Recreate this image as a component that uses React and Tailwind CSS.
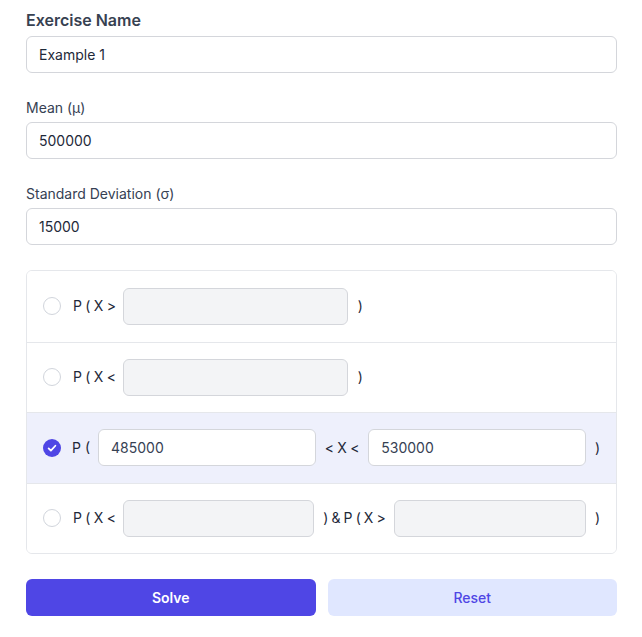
import { useState } from 'react'

const font = { fontFamily: 'Inter, "Noto Sans", sans-serif' }

function Radio({ checked, onClick }) {
  if (checked) {
    return (
      <button onClick={onClick} className="w-[18px] h-[18px] shrink-0 rounded-full bg-[#4f46e5] flex items-center justify-center">
        <svg viewBox="0 0 16 16" className="w-3 h-3" fill="none" stroke="white" strokeWidth="2.4" strokeLinecap="round" strokeLinejoin="round">
          <path d="M3.5 8.5l3 3 6-6.5" />
        </svg>
      </button>
    )
  }
  return <button onClick={onClick} className="w-[18px] h-[18px] shrink-0 rounded-full border border-gray-300 bg-white" />
}

function BoxInput({ value, active, className = '' }) {
  return (
    <input
      defaultValue={value}
      disabled={!active}
      className={`h-[37px] rounded-md border border-[#d4d6db] px-3 text-sm text-gray-700 outline-none ${
        active ? 'bg-white' : 'bg-[#f3f4f6]'
      } ${className}`}
    />
  )
}

export default function App() {
  const [selected, setSelected] = useState(2)

  const fields = [
    { label: 'Exercise Name', value: 'Example 1', bold: true },
    { label: 'Mean (μ)', value: '500000' },
    { label: 'Standard Deviation (σ)', value: '15000' },
  ]

  const rowClass = (i) =>
    `flex items-center h-[70.5px] pl-4 pr-4 ${i > 0 ? 'border-t border-gray-200' : ''} ${
      selected === i ? 'bg-[#eef0fc]' : 'bg-white'
    }`

  return (
    <div style={font} className="bg-white min-h-screen pl-[26px] pr-[25px] pt-[9px] pb-6 text-gray-700">
      <div className="flex flex-col gap-[25px]">
        {fields.map((f) => (
          <div key={f.label}>
            <label
              className={`block ${
                f.bold ? 'text-base leading-[22px] font-semibold text-[#374151] mb-[5px]' : 'text-sm leading-5 mb-1'
              }`}
            >
              {f.label}
            </label>
            <input
              defaultValue={f.value}
              className="w-full h-[37px] rounded-md border border-[#d4d6db] px-3 text-sm text-gray-800 outline-none"
            />
          </div>
        ))}

        <div className="rounded-md border border-gray-200 overflow-hidden text-sm text-gray-800">
          <div className={rowClass(0)}>
            <Radio checked={selected === 0} onClick={() => setSelected(0)} />
            <span className="ml-3 mr-[7px] tracking-[-0.02em]">P ( X &gt;</span>
            <BoxInput active={selected === 0} className="w-[225px]" />
            <span className="ml-[10px]">)</span>
          </div>
          <div className={rowClass(1)}>
            <Radio checked={selected === 1} onClick={() => setSelected(1)} />
            <span className="ml-3 mr-[7px] tracking-[-0.02em]">P ( X &lt;</span>
            <BoxInput active={selected === 1} className="w-[225px]" />
            <span className="ml-[10px]">)</span>
          </div>
          <div className={rowClass(2)}>
            <Radio checked={selected === 2} onClick={() => setSelected(2)} />
            <span className="ml-[11px] mr-2">P (</span>
            <BoxInput value="485000" active={selected === 2} className="flex-1 min-w-0" />
            <span className="mx-[9px] tracking-[-0.02em]">&lt; X &lt;</span>
            <BoxInput value="530000" active={selected === 2} className="flex-1 min-w-0" />
            <span className="ml-[9px]">)</span>
          </div>
          <div className={rowClass(3)}>
            <Radio checked={selected === 3} onClick={() => setSelected(3)} />
            <span className="ml-3 mr-[7px] tracking-[-0.02em]">P ( X &lt;</span>
            <BoxInput active={selected === 3} className="flex-1 min-w-0" />
            <span className="mx-[9px] tracking-[-0.03em]">) &amp; P ( X &gt;</span>
            <BoxInput active={selected === 3} className="flex-1 min-w-0" />
            <span className="ml-[9px]">)</span>
          </div>
        </div>

        <div className="grid grid-cols-2 gap-3">
          <button className="h-[37px] rounded-md bg-[#4f46e5] text-white text-sm font-semibold">Solve</button>
          <button className="h-[37px] rounded-md bg-[#e0e7ff] text-[#4f46e5] text-sm font-medium">Reset</button>
        </div>
      </div>
    </div>
  )
}
